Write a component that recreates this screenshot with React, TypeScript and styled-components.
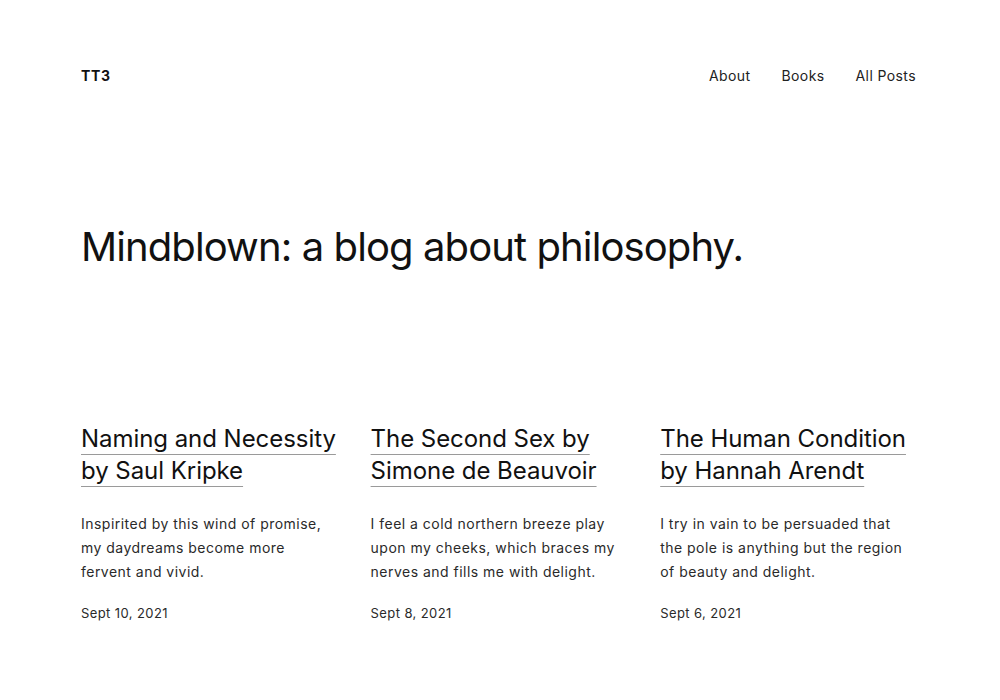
import React from "react";
import styled, { createGlobalStyle } from "styled-components";

const Global = createGlobalStyle`
  html, body { margin: 0; padding: 0; background: #ffffff; }
  body { font-family: Inter, "Noto Sans", sans-serif; color: #111; -webkit-font-smoothing: antialiased; }
`;

const Page = styled.div`
  width: 1000px;
  height: 700px;
  box-sizing: border-box;
  padding: 0 84px 0 81px;
  display: flex;
  flex-direction: column;
`;

const Header = styled.header`
  display: flex;
  justify-content: space-between;
  align-items: center;
  height: 36px;
  margin-top: 57px;
`;

const SiteTitle = styled.a`
  font-size: 14px;
  font-weight: 700;
  color: #111;
  text-decoration: none;
  letter-spacing: 0.6px;
`;

const Nav = styled.nav`
  display: flex;
  gap: 31px;
`;

const NavLink = styled.a`
  font-size: 14px;
  color: #222;
  text-decoration: none;
  letter-spacing: 0.4px;
`;

const Hero = styled.h1`
  margin: 126px 0 0;
  font-size: 40px;
  font-weight: 400;
  line-height: 56px;
  letter-spacing: -0.9px;
  color: #111;
`;

const Posts = styled.div`
  margin-top: 148px;
  display: grid;
  grid-template-columns: repeat(3, 257.6px);
  column-gap: 32px;
`;

const Post = styled.article`
  display: flex;
  flex-direction: column;
`;

const PostTitle = styled.h2`
  margin: 0;
  font-size: 24px;
  font-weight: 400;
  line-height: 32px;
  letter-spacing: -0.05px;
`;

const TitleLink = styled.a`
  color: #111;
  text-decoration: underline;
  text-decoration-color: #9a9a9a;
  text-decoration-thickness: 1px;
  text-underline-offset: 7px;
`;

const Excerpt = styled.p`
  margin: 25px 0 0;
  font-size: 14px;
  line-height: 24px;
  letter-spacing: 0.48px;
  color: #2a2a2a;
`;

const Date = styled.time`
  margin-top: 21px;
  font-size: 13px;
  letter-spacing: 0.4px;
  color: #2a2a2a;
`;

const posts = [
  {
    title: ["Naming and Necessity", "by Saul Kripke"],
    excerpt: ["Inspirited by this wind of promise,", "my daydreams become more", "fervent and vivid."],
    date: "Sept 10, 2021",
  },
  {
    title: ["The Second Sex by", "Simone de Beauvoir"],
    excerpt: ["I feel a cold northern breeze play", "upon my cheeks, which braces my", "nerves and fills me with delight."],
    date: "Sept 8, 2021",
  },
  {
    title: ["The Human Condition", "by Hannah Arendt"],
    excerpt: ["I try in vain to be persuaded that", "the pole is anything but the region", "of beauty and delight."],
    date: "Sept 6, 2021",
  },
];

export default function App() {
  return (
    <>
      <Global />
      <Page>
        <Header>
          <SiteTitle href="#">TT3</SiteTitle>
          <Nav>
            <NavLink href="#">About</NavLink>
            <NavLink href="#">Books</NavLink>
            <NavLink href="#">All Posts</NavLink>
          </Nav>
        </Header>
        <Hero>Mindblown: a blog about philosophy.</Hero>
        <Posts>
          {posts.map((p) => (
            <Post key={p.date}>
              <PostTitle>
                <TitleLink href="#">
                  {p.title[0]}
                  <br />
                  {p.title[1]}
                </TitleLink>
              </PostTitle>
              <Excerpt>
                {p.excerpt.map((l, i) => (
                  <React.Fragment key={i}>
                    {l}
                    {i < p.excerpt.length - 1 && <br />}
                  </React.Fragment>
                ))}
              </Excerpt>
              <Date>{p.date}</Date>
            </Post>
          ))}
        </Posts>
      </Page>
    </>
  );
}
